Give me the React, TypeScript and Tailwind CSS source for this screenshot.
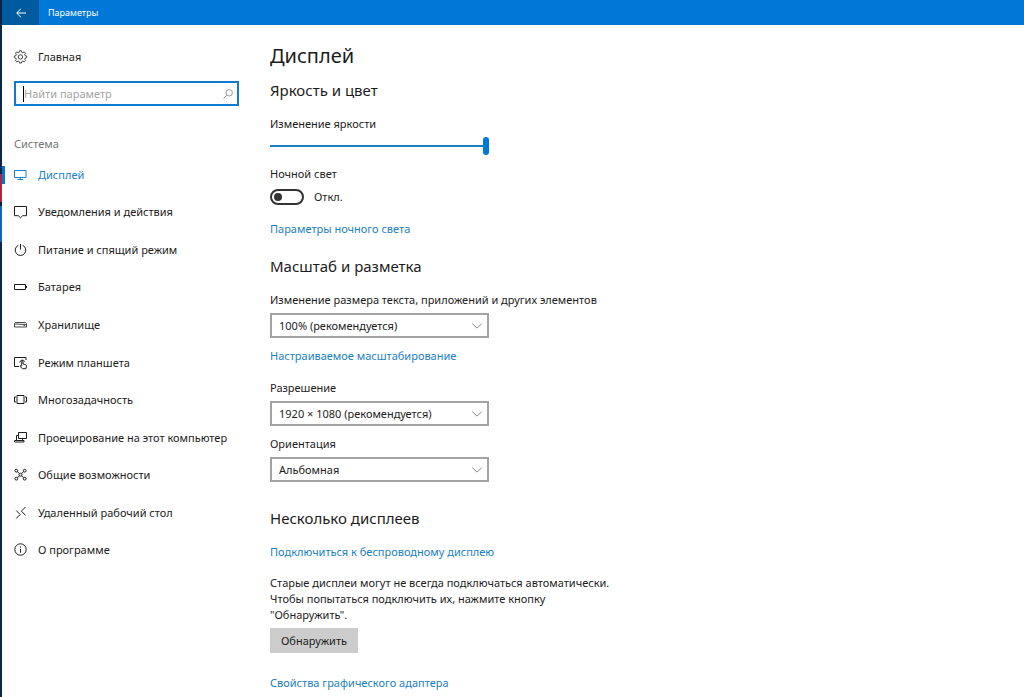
import { ReactNode } from 'react'

type NavItem = { label: string; icon: ReactNode; active?: boolean }

function Icon({ children }: { children: ReactNode }) {
  return (
    <svg
      viewBox="0 0 14 14"
      className="size-3.5 shrink-0 overflow-visible"
      fill="none"
      stroke="currentColor"
      strokeWidth="1"
      aria-hidden="true"
    >
      {children}
    </svg>
  )
}

const navItems: NavItem[] = [
  {
    label: 'Дисплей',
    active: true,
    icon: <path d="M.5 2.5H12v7H.5zM6.3 9.5v2M3.500 11.500H9" />,
  },
  {
    label: 'Уведомления и действия',
    icon: <path d="M.5 1.500h12v9.200H8.700l-2.200 2.100-2.200-2.100H.500z" />,
  },
  {
    label: 'Питание и спящий режим',
    icon: <path d="M6.500 1v5.500M4.400 2.300a5.300 5.300 0 1 0 4.200 0" />,
  },
  {
    label: 'Батарея',
    icon: <path d="M.5 4.500h11v5h-11zM12.500 6v2" />,
  },
  {
    label: 'Хранилище',
    icon: <path d="M1.500 4.500h10l1 1v3.500H.500V5.500zM1 6l11.500.5M9.500 7.500H11" strokeWidth=".8" />,
  },
  {
    label: 'Режим планшета',
    icon: (
      <>
        <path d="M5 10.500H.5v-9h11.500V4" />
        <path d="M7.700 9.500V5.700c0-1 1.400-1 1.400 0v2.300l2.500.7c.8.200 1 .7.900 1.500l-.6 2.500H8.500L6 10.300c0-.9 1-1 1.700-.3z" />
        <path d="M5.800 6.500a2.600 2.600 0 0 1 5-.8" />
      </>
    ),
  },
  {
    label: 'Многозадачность',
    icon: <path d="M3 2.500h7v8H3zM2 4H.500v5H2M11 4h1.500v5H11" />,
  },
  {
    label: 'Проецирование на этот компьютер',
    icon: <path d="M4.500 1.500h8v6h-8zM4.500 4.500h-2v4.500M8.500 7.500v1.500M.5 9.500h9.500v1.500H.500z" />,
  },
  {
    label: 'Общие возможности',
    icon: (
      <>
        <circle cx="2.300" cy="2.700" r="1.400" />
        <circle cx="10.700" cy="2.700" r="1.400" />
        <circle cx="2.300" cy="10.700" r="1.400" />
        <circle cx="10.700" cy="10.700" r="1.400" />
        <circle cx="6.500" cy="6.700" r="1.500" />
        <path d="m3.400 3.600 2 2M9.600 3.600l-2 2M3.400 9.800l2-2M9.600 9.800l-2-2" />
      </>
    ),
  },
  {
    label: 'Удаленный рабочий стол',
    icon: <path d="m2.200 4.500 4 4-4 4M11.500 1 7.300 5.200l4.200 4" />,
  },
  {
    label: 'О программе',
    icon: (
      <>
        <circle cx="6.500" cy="6.500" r="5.700" />
        <path d="M6.500 5.800v4M6.500 3.400v1.200" />
      </>
    ),
  },
]

function TitleBar() {
  return (
    <header className="flex h-[25px] items-stretch bg-[#0078d7] text-white">
      <button type="button" aria-label="Назад" className="flex w-[37px] items-center justify-center bg-[#005a9e]">
        <svg viewBox="0 0 10 10" className="size-2.5" fill="none" stroke="currentColor" aria-hidden="true">
          <path d="M10 5H.8M4.800.8.800 5l4 4.200" />
        </svg>
      </button>
      <h1 className="pl-[9px] text-[9px] leading-[25px]">Параметры</h1>
    </header>
  )
}

function Sidebar() {
  return (
    <aside className="w-[256px] shrink-0 pt-6">
      <a href="#home" className="flex h-4 items-center gap-2.5 pl-3">
        <Icon>
          <path
            d="M5.700.7h1.600l.5 1.600 1 .4 1.500-.8 1.200 1.200-.8 1.500.4 1 1.600.5v1.600l-1.600.5-.4 1 .8 1.500-1.200 1.200-1.500-.8-1 .4-.5 1.600H5.700l-.5-1.600-1-.4-1.500.8-1.200-1.200.8-1.500-.4-1L.3 7.700V6.100l1.600-.5.4-1-.8-1.500 1.200-1.200 1.500.8 1-.4z"
            strokeWidth=".8"
          />
          <circle cx="6.500" cy="6.900" r="2.200" strokeWidth=".8" />
        </Icon>
        Главная
      </a>

      <label className="mt-4 mr-[19px] ml-3 flex h-[25px] items-center border-2 border-[#0f7bd0] pr-1 pl-[7px]">
        <span className="h-4 w-px shrink-0 bg-black" />
        <input
          type="text"
          aria-label="Найти параметр"
          placeholder="Найти параметр"
          className="min-w-0 flex-1 bg-transparent outline-none placeholder:text-[#a3a3a3]"
        />
        <svg viewBox="0 0 10 10" className="size-2.5 text-[#999999]" fill="none" stroke="currentColor" aria-hidden="true">
          <circle cx="6.200" cy="3.800" r="3.200" />
          <path d="M3.900 6.100.5 9.500" />
        </svg>
      </label>

      <h2 className="mt-[30px] pl-3 text-[#767676]">Система</h2>

      {/* Sections */}
      <nav className="mt-1">
        <ul className="flex h-[413px] flex-col">
          {navItems.map((item) => (
            <li key={item.label} className="flex flex-1 items-center">
              <span className={item.active ? 'h-[18px] w-[3px] bg-[#0078d7]' : 'w-[3px]'} />
              <a
                href="#section"
                aria-current={item.active ? 'page' : undefined}
                className={
                  item.active
                    ? 'flex items-center gap-2.5 pl-[9px] text-[#1a80cc]'
                    : 'flex items-center gap-2.5 pl-[9px]'
                }
              >
                <Icon>{item.icon}</Icon>
                {item.label}
              </a>
            </li>
          ))}
        </ul>
      </nav>
    </aside>
  )
}

function SelectBox({ id, label, value }: { id: string; label: string; value: string }) {
  return (
    <div className="flex flex-col gap-[5px]">
      <label htmlFor={id}>{label}</label>
      <div className="relative w-[219px]">
        <select
          id={id}
          className="block h-[25px] w-full appearance-none border-2 border-[#a3a3a3] bg-white pl-[7px] outline-none"
        >
          <option>{value}</option>
        </select>
        <svg
          viewBox="0 0 10 6"
          className="pointer-events-none absolute top-[10px] right-[7px] h-1.5 w-2.5 text-[#888888]"
          fill="none"
          stroke="currentColor"
          aria-hidden="true"
        >
          <path d="M.3.500 5 5.200 9.700.5" />
        </svg>
      </div>
    </div>
  )
}

function TextLink({ children }: { children: ReactNode }) {
  return (
    <a href="#link" className="self-start text-[#1a80c4]">
      {children}
    </a>
  )
}

function SectionTitle({ children }: { children: ReactNode }) {
  return <h3 className="text-[15px] leading-6">{children}</h3>
}

export default function App() {
  return (
    <div className="flex min-h-screen bg-white font-['Noto_Sans','Open_Sans',sans-serif] text-[11px] leading-4 text-[#1c1c1c]">
      {/* Desktop edge behind the window */}
      <div className="flex w-0.5 shrink-0 flex-col bg-[#0b2748]">
        <span className="mt-[174px] h-7 bg-[#b3243f]" />
        <span className="mt-1 h-9 bg-[#0f66b5]" />
      </div>

      <div className="min-w-0 flex-1">
        <TitleBar />
        <div className="flex">
          <Sidebar />

          <main className="flex flex-1 flex-col pt-[15px] pl-3">
            <h2 className="text-[20px] leading-8">Дисплей</h2>

            <section className="mt-1.5 flex flex-col">
              <SectionTitle>Яркость и цвет</SectionTitle>
              <label htmlFor="brightness" className="mt-3.5">
                Изменение яркости
              </label>
              <input
                id="brightness"
                type="range"
                min="0"
                max="100"
                defaultValue="100"
                className="mt-1 h-5 w-[219px] appearance-none bg-transparent [&::-webkit-slider-runnable-track]:h-0.5 [&::-webkit-slider-runnable-track]:bg-[#1a80c4] [&::-webkit-slider-thumb]:-mt-2 [&::-webkit-slider-thumb]:h-[18px] [&::-webkit-slider-thumb]:w-1.5 [&::-webkit-slider-thumb]:appearance-none [&::-webkit-slider-thumb]:rounded-[3px] [&::-webkit-slider-thumb]:bg-[#0078d7]"
              />
              <span id="night-light" className="mt-2.5">
                Ночной свет
              </span>
              <label className="mt-[7px] flex items-center gap-2.5 self-start">
                <input
                  type="checkbox"
                  role="switch"
                  aria-labelledby="night-light"
                  className="flex h-4 w-[34px] appearance-none items-center rounded-full border-2 border-[#333333] pl-0.5 before:size-2 before:rounded-full before:bg-[#333333]"
                />
                Откл.
              </label>
              <div className="mt-4 flex">
                <TextLink>Параметры ночного света</TextLink>
              </div>
            </section>

            <section className="mt-[17px] flex flex-col">
              <SectionTitle>Масштаб и разметка</SectionTitle>
              <div className="mt-3.5 mb-2.5">
                <SelectBox
                  id="scale"
                  label="Изменение размера текста, приложений и других элементов"
                  value="100% (рекомендуется)"
                />
              </div>
              <TextLink>Настраиваемое масштабирование</TextLink>
              <div className="mt-4 flex flex-col gap-2.5">
                <SelectBox id="resolution" label="Разрешение" value="1920 × 1080 (рекомендуется)" />
                <SelectBox id="orientation" label="Ориентация" value="Альбомная" />
              </div>
            </section>

            <section className="mt-6 flex flex-col">
              <SectionTitle>Несколько дисплеев</SectionTitle>
              <div className="mt-3.5 mb-[15px] flex">
                <TextLink>Подключиться к беспроводному дисплею</TextLink>
              </div>
              <p>
                Старые дисплеи могут не всегда подключаться автоматически.
                <br />
                Чтобы попытаться подключить их, нажмите кнопку
                <br />
                "Обнаружить".
              </p>
              <button type="button" className="mt-[5px] mb-[22px] h-[25px] self-start bg-[#cccccc] px-[11px]">
                Обнаружить
              </button>
              <TextLink>Свойства графического адаптера</TextLink>
            </section>
          </main>
        </div>
      </div>
    </div>
  )
}
